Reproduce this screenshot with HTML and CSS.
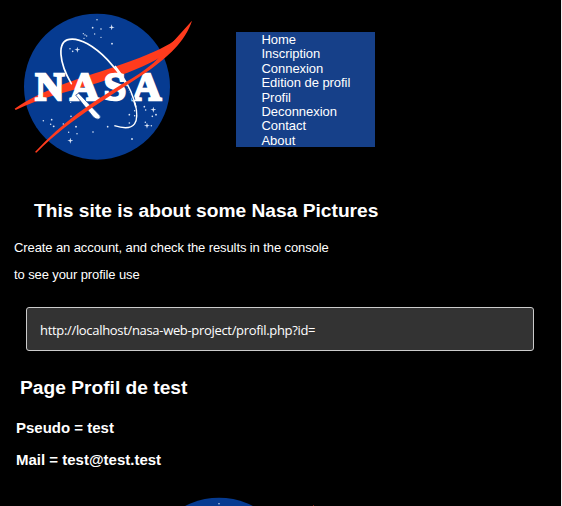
FILE: index.html
```html
<!DOCTYPE html>
<html lang="fr">
<head>
<meta charset="utf-8">
<title>Nasa Pictures</title>
<link rel="stylesheet" href="styles.css">
</head>
<body>
<div class="page">
  <header class="header">
    <svg class="logo" viewBox="0 0 600 510">
      <defs>
        <g id="emblem">
          <circle cx="291" cy="260" r="219" fill="#063b91"/>
          <g fill="#dce6f7">
            <path d="M335 73l2 7 7 2-7 2-2 7-2-7-7-2 7-2zM232 140l2 7 7 2-7 2-2 7-2-7-7-2 7-2zM211 413l2 7 7 2-7 2-2 7-2-7-7-2 7-2zM460 320l2 7 7 2-7 2-2 7-2-7-7-2 7-2zM441 368l2 7 7 2-7 2-2 7-2-7-7-2 7-2z"/>
            <circle cx="291" cy="59" r="2.2"/><circle cx="278" cy="83" r="2.5"/><circle cx="303" cy="87" r="2.5"/><circle cx="284" cy="102" r="2"/><circle cx="303" cy="112" r="2"/><circle cx="336" cy="131" r="2.8"/><circle cx="250" cy="101" r="2"/><circle cx="255" cy="105" r="2"/><circle cx="260" cy="108" r="2"/><circle cx="252" cy="115" r="2"/><circle cx="210" cy="146" r="2.3"/><circle cx="218" cy="154" r="2.5"/>
            <circle cx="130" cy="362" r="2.3"/><circle cx="155" cy="359" r="2.5"/><circle cx="152" cy="373" r="2.3"/><circle cx="161" cy="379" r="2.8"/><circle cx="190" cy="372" r="2.3"/><circle cx="213" cy="349" r="2.5"/><circle cx="212" cy="307" r="2"/><circle cx="228" cy="380" r="2.8"/><circle cx="206" cy="397" r="2.2"/><circle cx="231" cy="401" r="2.2"/><circle cx="279" cy="396" r="2.5"/><circle cx="323" cy="380" r="2.5"/><circle cx="396" cy="417" r="2.8"/><circle cx="388" cy="344" r="2.5"/><circle cx="388" cy="369" r="2.5"/><circle cx="404" cy="332" r="2.3"/><circle cx="404" cy="347" r="2.3"/><circle cx="433" cy="320" r="2.5"/><circle cx="437" cy="330" r="2.3"/><circle cx="457" cy="349" r="2.5"/><circle cx="468" cy="344" r="2.8"/><circle cx="436" cy="367" r="2.3"/><circle cx="454" cy="377" r="2.3"/>
          </g>
          <path fill="#ff3b1d" d="M576 62C551 106 523 125 480 147C428 172 365 194 300 215C235 235 120 272 44 326L47 330C120 293 215 272 295 248C345 234 420 206 471 178C490 164 535 140 576 62Z"/>
          <path fill="none" stroke="#fff" stroke-width="5" stroke-linecap="round" d="M214 251C177 188 170 124 208 118C271 107 383 224 407 320"/>
          <path fill="none" stroke="#fff" stroke-width="4" d="M405 308C419 365 408 398 343 377"/>
          <text class="wordmark" x="106 210 311 397" y="299">NASA</text>
          <path fill="none" stroke="#063b91" stroke-width="9" d="M382 256C390 270 396 282 402 300"/>
          <path fill="none" stroke="#fff" stroke-width="4.5" d="M345 198C372 232 390 260 402 300"/>
          <path fill="#fff" stroke="#063b91" stroke-width="2" d="M227 285L236 280L299 346Q305 353 296 357Q288 359 280 351Z"/>
          <path fill="#ff3b1d" d="M576 62C555 126 500 173 450 209C345 282 220 347 109 458L105 456C188 365 275 308 357 258C401 232 442 208 473 176Z"/>
        </g>
      </defs>
      <use href="#emblem"/>
    </svg>
    <nav class="menu">
      <a>Home</a>
      <a>Inscription</a>
      <a>Connexion</a>
      <a>Edition de profil</a>
      <a>Profil</a>
      <a>Deconnexion</a>
      <a>Contact</a>
      <a>About</a>
    </nav>
  </header>
  <main>
    <h2 class="title">This site is about some Nasa Pictures</h2>
    <p class="text">Create an account, and check the results in the console</p>
    <p class="text">to see your profile use</p>
    <div class="code">http://localhost/nasa-web-project/profil.php?id=</div>
    <h2 class="profile-title">Page Profil de test</h2>
    <h3 class="field">Pseudo = test</h3>
    <h3 class="field">Mail = test@test.test</h3>
  </main>
  <footer class="footer">
    <svg class="logo" viewBox="0 0 600 510"><use href="#emblem"/></svg>
  </footer>
</div>
</body>
</html>
```
FILE: styles.css
```css
* { box-sizing: border-box; }
body { margin: 0; background: #000; }
.page {
  height: 506px;
  overflow: hidden;
  border-right: 1px solid #f0f0f0;
  background: #000;
  color: #fff;
  font-family: "Liberation Sans", Arial, sans-serif;
}
.header { display: flex; height: 170px; }
.logo { display: block; flex: none; width: 200px; height: 170px; }
.wordmark {
  font: bold 121px "Liberation Serif", serif;
  fill: #fff;
  stroke: #fff;
  stroke-width: 7px;
}
.menu {
  display: flex;
  flex-direction: column;
  width: 139px;
  height: 115px;
  margin: 32px 0 0 36px;
  padding: 1px 0 0 25.5px;
  background: #164089;
  font-size: 13px;
  line-height: 14.4px;
  letter-spacing: -0.05px;
}
.title { margin: 28px 0 0 34px; font-size: 19.2px; line-height: 25px; }
.text { margin: 16px 0 0 14px; font-size: 13px; line-height: 18px; letter-spacing: -0.1px; }
.text + .text { margin-top: 9px; }
.code {
  width: 508px;
  height: 44px;
  margin: 23px 0 0 26px;
  padding-left: 13px;
  border: 1px solid #ccc;
  border-radius: 3px;
  background: #333;
  font: 13px/45px "Open Sans", "Noto Sans", sans-serif;
  letter-spacing: -0.32px;
}
.profile-title { margin: 25px 0 0 20px; font-size: 19.2px; line-height: 24px; }
.field { margin: 18px 0 0 16px; font-size: 15px; line-height: 20px; }
.field + .field { margin-top: 12px; }
.footer { margin: 14px 0 0 122px; }
```
